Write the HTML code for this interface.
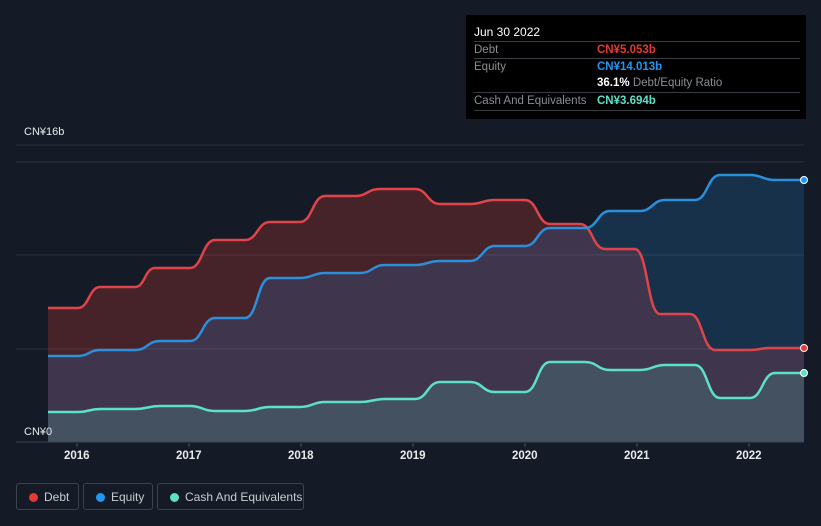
<!DOCTYPE html>
<html><head><meta charset="utf-8"><style>
body{margin:0;width:821px;height:526px;background:#151b26;font-family:"Liberation Sans",sans-serif;overflow:hidden;position:relative}
.tt{position:absolute;left:466px;top:15px;width:340px;height:104px;background:#000;}
.tt .h{position:absolute;left:8px;top:10px;color:#fff;font-size:12px}
.row{position:absolute;left:8px;width:326px;border-top:1px solid #3a3d44;font-size:11.5px;color:#8a8d93;height:17px;line-height:17px}
.row span{position:absolute;left:123px;font-weight:bold}
.leg{position:absolute;top:483px;height:27px;border:1px solid #3d424c;border-radius:3px;color:#c9ccd1;font-size:12px;line-height:27px;box-sizing:border-box}
.leg i{position:absolute;left:12px;top:9px;width:9px;height:9px;border-radius:50%}
.leg b{font-weight:normal;position:absolute;left:27px}
.ax{position:absolute;top:450px;color:#e8eaed;font-size:11.5px;font-weight:bold}
</style></head><body>
<svg width="821" height="526" style="position:absolute;left:0;top:0">
<line x1="16" y1="162" x2="804" y2="162" stroke="#2c323d"/>
<line x1="16" y1="145" x2="804" y2="145" stroke="#2c323d"/>
<line x1="16" y1="255" x2="804" y2="255" stroke="#2c323d"/>
<line x1="16" y1="349" x2="804" y2="349" stroke="#2c323d"/>
<g id="g"></g>
<line x1="16" y1="442" x2="804" y2="442" stroke="#3a4150"/>
<g stroke="#4a505c"><line x1="77" y1="443" x2="77" y2="447"/><line x1="189" y1="443" x2="189" y2="447"/><line x1="301" y1="443" x2="301" y2="447"/><line x1="413" y1="443" x2="413" y2="447"/><line x1="525" y1="443" x2="525" y2="447"/><line x1="637" y1="443" x2="637" y2="447"/><line x1="749" y1="443" x2="749" y2="447"/></g>
<circle cx="804" cy="180" r="3.5" fill="#2196f3" stroke="#fff" stroke-width="1"/>
<circle cx="804" cy="348" r="3.5" fill="#e53935" stroke="#fff" stroke-width="1"/>
<circle cx="804" cy="373" r="3.5" fill="#5ce0c8" stroke="#fff" stroke-width="1"/>
<text x="24" y="135" fill="#e8eaed" font-size="11">CN¥16b</text>
<text x="24" y="435" fill="#e8eaed" font-size="11">CN¥0</text>
</svg>
<script>
function P(a){let d="M"+a[0]+","+a[1];for(let i=2;i<a.length;i+=2){let x0=a[i-2],y0=a[i-1],x=a[i],y=a[i+1],m=(x-x0)/2;d+=` C${x0+m},${y0} ${x-m},${y} ${x},${y}`;}return d;}
const D=[48,308,78,308,100,287,135,287,155,268,190,268,215,240,245,240,270,222,300,222,325,196,355,196,380,189,415,189,440,204,470,204,495,200,525,200,550,224,580,224,605,249,635,249,660,314,690,314,715,350,750,350,770,348,804,348];
const E=[48,356,78,356,100,350,135,350,160,341,190,341,215,318,245,318,270,278,300,278,325,273,360,273,385,265,415,265,440,261,470,261,495,246,525,246,550,228,585,228,610,211,640,211,665,200,695,200,720,175,750,175,775,180,804,180];
const C=[48,412,78,412,100,409,135,409,160,406,190,406,215,411,245,411,270,407,300,407,325,402,360,402,385,399,415,399,440,382,470,382,495,392,525,392,550,362,585,362,610,370,640,370,665,365,695,365,720,398,750,398,775,373,804,373];
let s="";
[[D,"rgba(229,57,53,0.24)"],[E,"rgba(33,150,243,0.18)"],[C,"rgba(92,224,200,0.16)"]].forEach(([a,f])=>{s+=`<path d="${P(a)} L804,442 L48,442Z" fill="${f}"/>`;});
[[D,"#e0444a"],[E,"#2b8fdc"],[C,"#5ce0c8"]].forEach(([a,c])=>{s+=`<path d="${P(a)}" fill="none" stroke="${c}" stroke-width="2.5"/>`;});
document.getElementById("g").innerHTML=s;
</script>
<div class="tt"><div class="h">Jun 30 2022</div>
<div class="row" style="top:26px">Debt<span style="color:#e53935">CN¥5.053b</span></div>
<div class="row" style="top:43px">Equity<span style="color:#2196f3">CN¥14.013b</span></div>
<div class="row" style="top:60px;border-top:none"><span style="color:#fff">36.1% <b style="color:#8a8d93;font-weight:normal">Debt/Equity Ratio</b></span></div>
<div class="row" style="top:77px">Cash And Equivalents<span style="color:#5ce0c8">CN¥3.694b</span></div>
<div class="row" style="top:95px;height:0"></div>
</div>
<div class="ax" style="left:64px">2016</div><div class="ax" style="left:176px">2017</div><div class="ax" style="left:288px">2018</div><div class="ax" style="left:400px">2019</div><div class="ax" style="left:512px">2020</div><div class="ax" style="left:624px">2021</div><div class="ax" style="left:736px">2022</div>
<div class="leg" style="left:16px;width:63px"><i style="background:#e53935"></i><b>Debt</b></div>
<div class="leg" style="left:83px;width:70px"><i style="background:#2196f3"></i><b>Equity</b></div>
<div class="leg" style="left:157px;width:147px"><i style="background:#5ce0c8"></i><b>Cash And Equivalents</b></div>
</body></html>
